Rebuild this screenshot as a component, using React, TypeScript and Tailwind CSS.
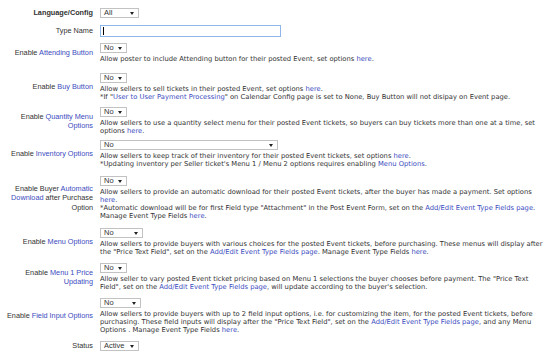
import React from "react";

const L = ({ children }: { children: React.ReactNode }) => (
  <span className="text-[#3b4cc0]">{children}</span>
);

const Sel = ({ v, w }: { v: string; w: string }) => (
  <div
    className={`${w} h-[10px] border border-[#c2c2c2] bg-white flex items-center justify-between pl-[3px] pr-[4px] text-[7.5px] text-[#333] leading-none`}
    style={{ fontFamily: '"Liberation Sans", Arial, sans-serif' }}
  >
    <span>{v}</span>
    <svg width="4" height="3" viewBox="0 0 4 3">
      <path d="M0 0 L4 0 L2 3 Z" fill="#222" />
    </svg>
  </div>
);

const Desc = ({ children }: { children: React.ReactNode }) => (
  <div
    className="mt-[2px] text-[6.75px] leading-[8px] text-[#333] whitespace-nowrap"
    style={{ fontFamily: '"DejaVu Sans", Verdana, sans-serif' }}
  >
    {children}
  </div>
);

const Row = ({
  label,
  children,
  bold,
  mt,
}: {
  label: React.ReactNode;
  children: React.ReactNode;
  bold?: boolean;
  mt: string;
}) => (
  <div className={`flex items-center ${mt}`}>
    <div
      className={`w-[93px] shrink-0 text-right text-[7.3px] leading-[9.5px] text-[#333] ${bold ? "font-bold" : ""}`}
      style={{ fontFamily: '"Liberation Sans", Arial, sans-serif' }}
    >
      {label}
    </div>
    <div className="ml-[7px] flex flex-col items-start">{children}</div>
  </div>
);

export default function App() {
  return (
    <div className="w-[550px] h-[360px] bg-white overflow-hidden pt-[8px]">
      <Row label="Language/Config" bold mt="mt-0">
        <Sel v="All" w="w-[39px]" />
      </Row>
      <Row label="Type Name" mt="mt-[7px]">
        <div className="w-[181px] h-[12px] border border-[#8fb6ea] bg-white flex items-center pl-[2px]">
          <div className="w-px h-[8px] bg-black" />
        </div>
      </Row>
      <Row label={<>Enable <L>Attending Button</L></>} mt="mt-[6px]">
        <Sel v="No" w="w-[27px]" />
        <Desc>
          Allow poster to include Attending button for their posted Event, set options <L>here</L>.
        </Desc>
      </Row>
      <Row label={<>Enable <L>Buy Button</L></>} mt="mt-[10px]">
        <Sel v="No" w="w-[27px]" />
        <Desc>
          Allow sellers to sell tickets in their posted Event, set options <L>here</L>.
          <br />
          *If "<L>User to User Payment Processing</L>" on Calendar Config page is set to None, Buy Button will not disipay on Event page.
        </Desc>
      </Row>
      <Row label={<>Enable <L>Quantity Menu<br />Options</L></>} mt="mt-[6px]">
        <Sel v="No" w="w-[27px]" />
        <Desc>
          Allow sellers to use a quantity select menu for their posted Event tickets, so buyers can buy tickets more than one at a time, set
          <br />
          options <L>here</L>.
        </Desc>
      </Row>
      <Row label={<>Enable <L>Inventory Options</L></>} mt="mt-[5px]">
        <Sel v="No" w="w-[178px]" />
        <Desc>
          Allow sellers to keep track of their inventory for their posted Event tickets, set options <L>here</L>.
          <br />
          *Updating inventory per Seller ticket's Menu 1 / Menu 2 options requires enabling <L>Menu Options</L>.
        </Desc>
      </Row>
      <Row label={<>Enable Buyer <L>Automatic</L><br /><L>Download</L> after Purchase<br />Option</>} mt="mt-[8px]">
        <Sel v="No" w="w-[27px]" />
        <Desc>
          Allow sellers to provide an automatic download for their posted Event tickets, after the buyer has made a payment. Set options
          <br />
          <L>here</L>.
          <br />
          *Automatic download will be for first Field type "Attachment" in the Post Event Form, set on the <L>Add/Edit Event Type Fields page</L>.
          <br />
          Manage Event Type Fields <L>here</L>.
        </Desc>
      </Row>
      <Row label={<>Enable <L>Menu Options</L></>} mt="mt-[8px]">
        <Sel v="No" w="w-[43px]" />
        <Desc>
          Allow sellers to provide buyers with various choices for the posted Event tickets, before purchasing. These menus will display after
          <br />
          the "Price Text Field", set on the <L>Add/Edit Event Type Fields page</L>. Manage Event Type Fields <L>here</L>.
        </Desc>
      </Row>
      <Row label={<>Enable <L>Menu 1 Price<br />Updating</L></>} mt="mt-[7px]">
        <Sel v="No" w="w-[27px]" />
        <Desc>
          Allow seller to vary posted Event ticket pricing based on Menu 1 selections the buyer chooses before payment. The "Price Text
          <br />
          Field", set on the <L>Add/Edit Event Type Fields page</L>, will update according to the buyer's selection.
        </Desc>
      </Row>
      <Row label={<>Enable <L>Field Input Options</L></>} mt="mt-[7px]">
        <Sel v="No" w="w-[41px]" />
        <Desc>
          Allow sellers to provide buyers with up to 2 field input options, i.e. for customizing the item, for the posted Event tickets, before
          <br />
          purchasing. These field inputs will display after the "Price Text Field", set on the <L>Add/Edit Event Type Fields page</L>, and any Menu
          <br />
          Options . Manage Event Type Fields <L>here</L>.
        </Desc>
      </Row>
      <Row label="Status" mt="mt-[7px]">
        <Sel v="Active" w="w-[39px]" />
      </Row>
    </div>
  );
}
